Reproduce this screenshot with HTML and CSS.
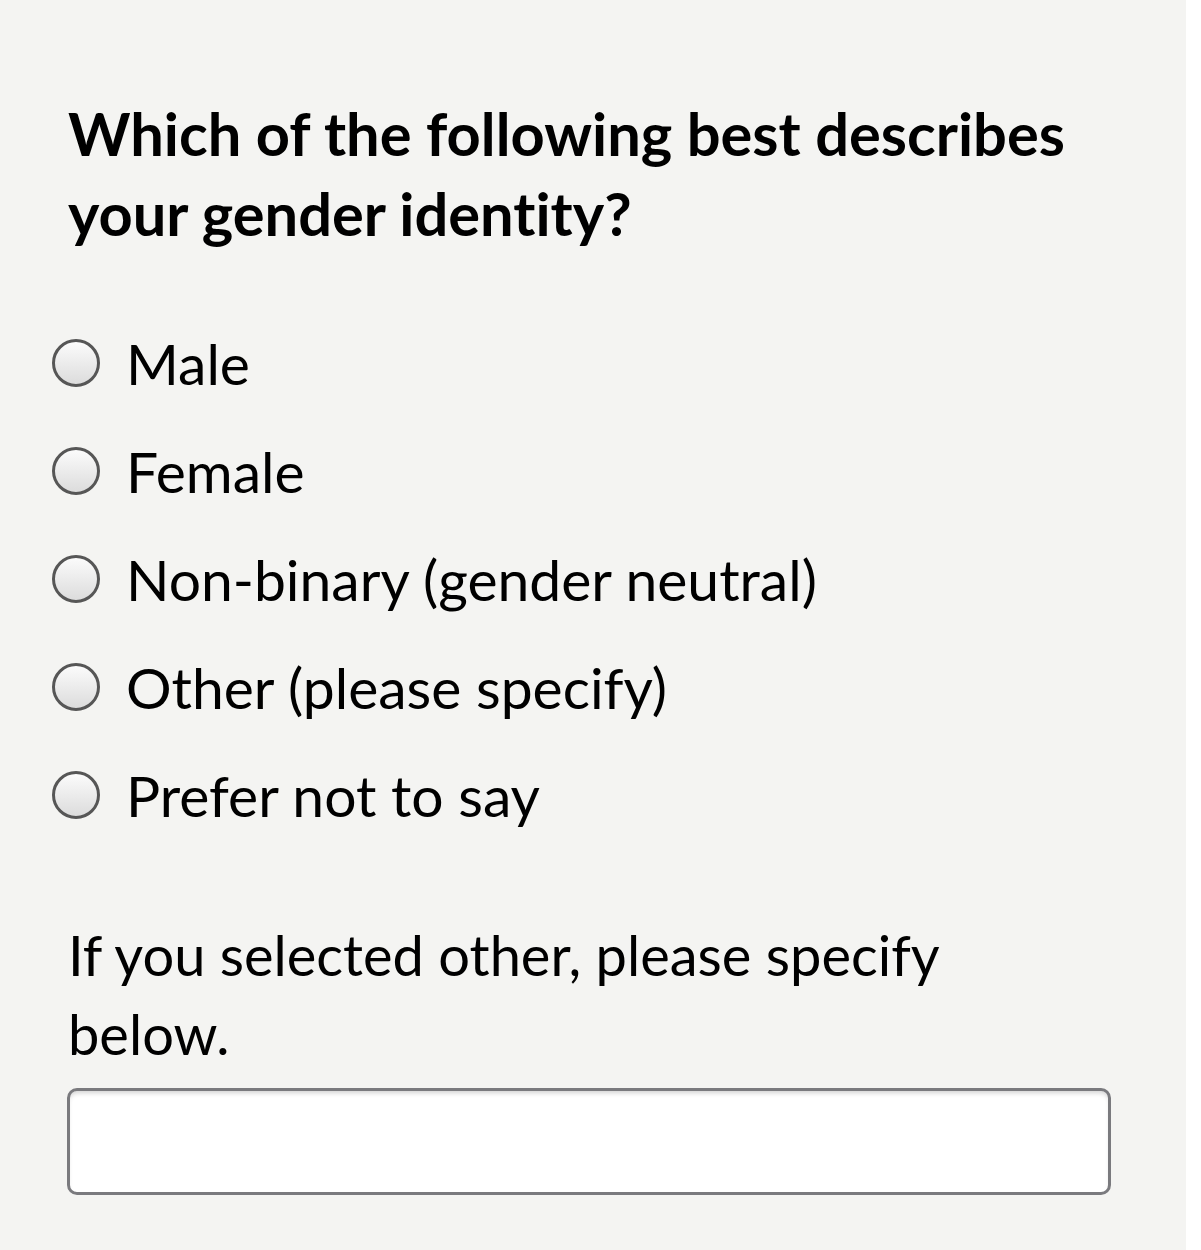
FILE: index.html
```html
<!DOCTYPE html>
<html>
<head>
<meta charset="utf-8">
<link rel="stylesheet" href="styles.css">
</head>
<body>
<div class="page">
  <div class="content">
    <h1 class="question">Which of the following best describes your gender identity?</h1>
    <div class="options">
      <label class="option"><span class="radio"></span><span class="label">Male</span></label>
      <label class="option"><span class="radio"></span><span class="label">Female</span></label>
      <label class="option"><span class="radio"></span><span class="label">Non-binary (gender neutral)</span></label>
      <label class="option"><span class="radio"></span><span class="label">Other (please specify)</span></label>
      <label class="option"><span class="radio"></span><span class="label">Prefer not to say</span></label>
    </div>
    <p class="specify">If you selected other, please specify below.</p>
    <div class="input"></div>
  </div>
</div>
</body>
</html>
```

FILE: styles.css
```css
html, body {
  margin: 0;
  padding: 0;
  background: #ffffff;
}
.page {
  width: 1186px;
  height: 1250px;
  background: #f4f4f2;
  font-family: Lato, "Open Sans", sans-serif;
  color: #000;
  font-variant-ligatures: none;
}
.content {
  padding-top: 93px;
  padding-left: 67px;
  width: 1044px;
}
.question {
  margin: 0;
  font-size: 59.6px;
  line-height: 80px;
  font-weight: 700;
  padding-left: 1px;
}
.options {
  margin-top: 56px;
  margin-left: -15px;
  display: flex;
  flex-direction: column;
}
.option {
  height: 108px;
  display: flex;
  align-items: center;
  font-size: 57px;
  line-height: 108px;
}
.radio {
  box-sizing: border-box;
  width: 48px;
  height: 48px;
  border-radius: 50%;
  border: 3px solid #565656;
  background: linear-gradient(#fbfbfb, #dcdcdc);
  margin-right: 26px;
  flex: none;
}
.specify {
  margin: 66px 0 0 1px;
  font-size: 56px;
  line-height: 79px;
  font-weight: 400;
}
.input {
  margin-top: 15px;
  box-sizing: border-box;
  height: 107px;
  width: 1044px;
  border: 3px solid #7a7a7e;
  border-radius: 10px;
  background: #fff;
  box-shadow: inset 0 4px 5px -2px rgba(0,0,0,0.18);
}
```
